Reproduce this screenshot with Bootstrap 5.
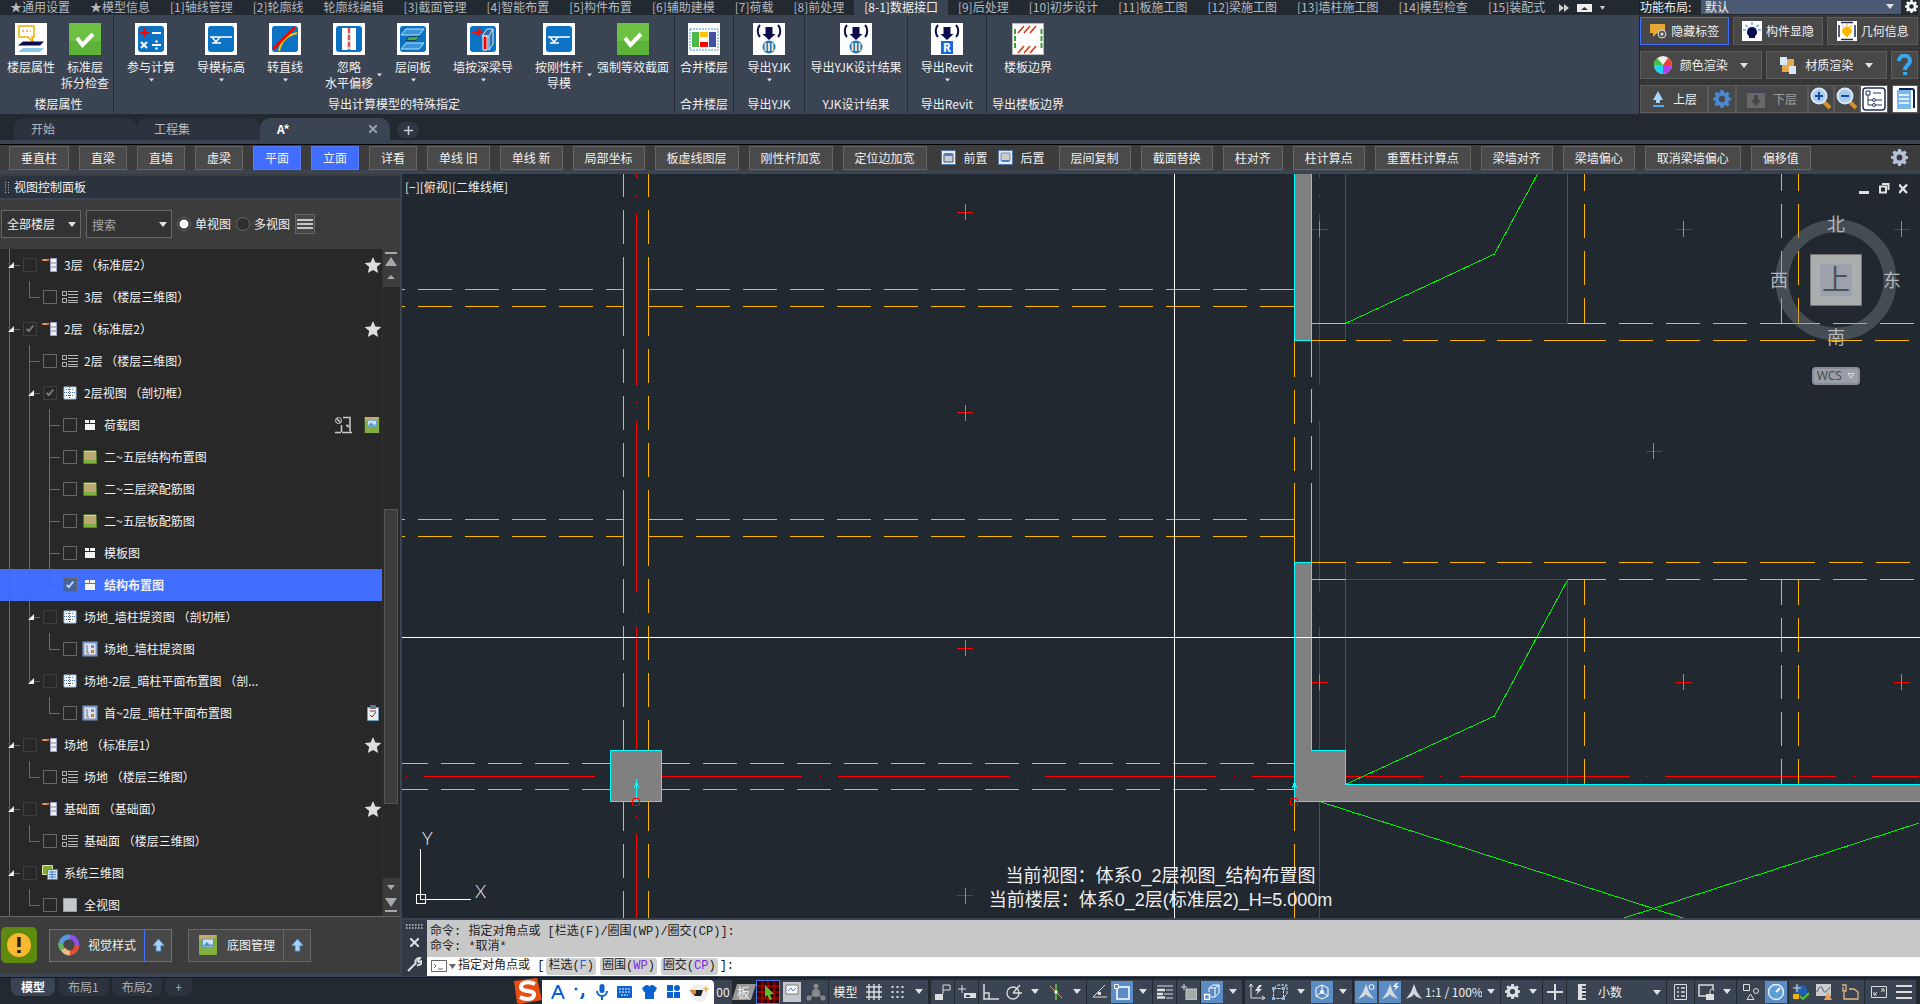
<!DOCTYPE html>
<html lang="zh-CN">
<head>
<meta charset="utf-8">
<meta name="viewport" content="width=device-width, initial-scale=1">
<title>A* - 结构布置图</title>
<link href="https://cdn.jsdelivr.net/npm/bootstrap@5.3.0/dist/css/bootstrap.min.css" rel="stylesheet">
<script src="https://cdn.jsdelivr.net/npm/bootstrap@5.3.0/dist/js/bootstrap.bundle.min.js"></script>
<style>
:root{--slate:#3b4453;--night:#222931;--coal:#3c3c3c;--edge:#666;--blue:#426eff;--ink:#f0f0f0}
body{font:12px/16px "Noto Sans CJK SC","Noto Sans",sans-serif;color:var(--ink);background:var(--night);height:100vh;overflow:hidden}
button,input,select{font:inherit;color:inherit}
button{background:none;border:0;padding:0}
svg{display:block;flex:none}
a{color:inherit;text-decoration:none}
/* ribbon */
.menu-tabs{height:15px;white-space:nowrap}
.menu-tabs a{line-height:13px;height:15px;padding:0 10px;color:#b4b9c0}
.menu-tabs a.on{background:var(--slate);color:var(--ink)}
.ribbon{background:var(--slate);height:99px}
.rgroup{border-right:1px solid #252b35;margin:1px 0}
.rgroup.first{width:114px;padding-left:4px}
.rgroup.padded{padding:0 2px}
.rgroup.last{border:0}
.rgroup .cap{line-height:16px;text-align:center;height:17px}
.rbtn{position:relative;padding-top:7px;display:flex;flex-direction:column;align-items:center;white-space:nowrap;line-height:16px}
.rbtn svg.ic{margin-bottom:4px}
.rbtn .dn{margin-top:3px}
.rbtn .side{position:absolute;right:2px;top:57px}
.c54{width:54px}.c58{width:58px}.c70{width:70px}.c78{width:78px}.c82{width:82px}.c102{width:102px}
/* display tools */
.tools{width:281px;background:#363636;border-left:1px solid #222;padding-right:2px}
.tools .rowx{height:28px;margin-bottom:6px}
.tools .rowx:last-child{margin-bottom:0}
.tbtn{border:1px solid #5c5c5c;background:#484848;display:flex;align-items:center;justify-content:center;gap:4px;height:28px}
.tbtn.sel{border-color:var(--blue)}
.tools .head{height:15px;background:var(--night);margin-bottom:2px}
.tools .head label{line-height:13px}
.tools select{appearance:none;background:#4b5a72;border:0;width:200px;height:14px;line-height:14px;padding:0 4px}
.over{position:absolute;pointer-events:none}
.a-layout{right:24px;top:4px}.a-field{right:5px;top:12px}.a-unit{right:5px;top:10px}
/* document tabs */
.doctabs{height:26px;padding:4px 0 0 14px}
.doctab{width:123px;height:22px;background:#2c333f;border-radius:10px 10px 0 0;padding-left:17px;color:#b4b9c0}
.doctab.on{background:var(--slate);color:#fff;font-weight:700;width:130px;padding-right:13px}
.plus-tab{width:22px;height:16px;background:#2f3744;border-radius:8px;margin-left:7px;color:#c8ccd2}
/* quick toolbar */
.quick{background:var(--coal);border-top:1px solid #000;height:26px;gap:10px;padding:1px 8px 0 9px;white-space:nowrap}
.qbtn{height:24px;border:1px solid var(--edge);background:#4a4a4a;padding:0 11px;line-height:22px}
.qbtn.on{background:var(--blue);border-color:#5a7cf0}
.strip{height:4px;background:var(--slate)}
/* side panel */
.side-panel{width:400px;background:var(--coal)}
.ptitle{height:22px;margin-top:2px;background:#2b333f;border-radius:4px 4px 0 0;padding-left:5px;gap:5px}
.filter{padding:0 1px;border-top:2px solid var(--slate);height:51px;gap:5px}
.fa{width:80px}.fb{width:86px}
.filter .duo{gap:4px}
.menub{border:1px solid var(--edge);padding:4px 1px;background:#484848}
.field{height:28px;background:#333;border:1px solid var(--edge);border-radius:0;appearance:none;padding:0 5px;width:100%;outline:0}
.field::placeholder{color:#a8a8a8;opacity:1}
.radio{appearance:none;width:14px;height:14px;border:1px solid #686868;border-radius:50%;background:#2e2e2e;margin:0}
.radio:checked{background:radial-gradient(#fff 0 4px,#2e2e2e 5px)}
.tree{background:#282828;overflow:hidden}
.node{height:32px;gap:0}
.node.sel{background:var(--blue);font-weight:700}
.gd{width:20px;height:32px;position:relative;flex:none}
.gd::before{content:"";position:absolute;left:9px;top:0;bottom:0;border-left:1px solid #6a6a6a}
.gd.e::before{bottom:15px}.gd.b::before{display:none}
.gd.t::after,.gd.e::after{content:"";position:absolute;left:9px;width:11px;top:16px;border-top:1px solid #6a6a6a}
.gd i{position:absolute;left:8px;top:13px;border-left:6px solid transparent;border-bottom:6px solid #eee;z-index:1}
.chk{appearance:none;width:14px;height:14px;border:1px solid #686868;background:transparent;margin:0 5px 0 3px;flex:none;position:relative}
.chk.dim{border-color:#3e3e3e}
.chk:checked::before{content:"";position:absolute;left:4px;top:1px;width:4px;height:8px;border:solid #777;border-width:0 2px 2px 0;transform:rotate(40deg)}
.sel .chk{background:#44629c}.sel .chk:checked::before{border-color:#bcd6f2}
.node label{margin-left:6px;white-space:nowrap}
.tail{margin-right:2px}
.scroller{width:18px;background:#282828;border-left:1px solid #303030}
.scroller div.pad{background:#3c3c3c;height:38px}
.thumb{background:#3d3d3d;border:1px solid #555;height:295px;width:14px;margin:222px 0 74px 1px}
.pfoot{height:57px;border-top:1px solid #6b6262;padding-left:1px}
.warn{width:36px;height:36px;background:#5f8a10;border-radius:5px;margin-right:12px}
.splitb{height:33px;border:1px solid var(--edge);background:#484848}
.splitb.sel,.splitb.sel button+button{border-color:var(--blue)}
.splitb button+button{width:27px;border-left:1px solid var(--edge)}
.gutter{width:2px;background:var(--slate)}
/* drawing */
.canvas{background:#212830;overflow:hidden}
.viewlabel{left:3px;top:5px}
.winctl{right:12px;top:8px;gap:9px}
.note{left:586px;bottom:6px;width:345px;font:18px/24px "Liberation Sans","Noto Sans CJK SC",sans-serif;text-align:center;white-space:nowrap;color:#eee}
.wcs{left:1410px;top:193px;width:48px;height:18px;border:2px solid #8d8c9b;border-radius:4px;background:#9a9ea6;color:#4a4f58;font:12px/14px "Noto Sans",sans-serif}
.l{fill:none;stroke-width:1;shape-rendering:crispEdges}
.or{stroke:#ffb400}.rd{stroke:#f00}.gr{stroke:#00f000}.pu{stroke:#a800f0}.bl{stroke:#3f489c}.cy{stroke:#0ff}.wh{stroke:#fff}
.da{stroke-dasharray:34 13}
/* command line */
.cmd{height:59px;border-top:2px solid var(--slate);border-bottom:1px solid var(--slate);background:#222831}
.cmdside{width:25px;background:#333a46}
.history{background:#c8c8c8;color:#222;height:37px;padding:5px 3px 0;font:12px/15px "Liberation Mono","Noto Sans CJK SC",monospace}
.prompt{background:#fff;color:#222;height:19px;padding-left:4px;gap:2px;font:12px/16px "Liberation Mono","Noto Sans CJK SC",monospace}
.prompt button{background:#cfcfcf;border-radius:3px;margin-right:2px;padding:0 2px;color:#222;height:17px}
.prompt b{font-weight:400;color:#2864e0}
.prompt b.v{color:#7a28e8}
/* status bar */
.status{height:27px;border-top:1px solid #14181f}
.ltabs{padding-left:11px}
.ltab{height:18px;background:#2c333f;border-radius:0 0 8px 8px;padding:0 10px;color:#a8adb5;margin-right:3px;line-height:18px}
.ltab.on{background:var(--slate);color:#fff;font-weight:700}
.ime{width:202px;height:26px}
.imebar{background:#fff;border-radius:0 4px 0 0;width:172px;height:24px}
.cell{width:24px;height:24px;display:flex;align-items:center;justify-content:center;background:var(--slate);flex:none;white-space:nowrap}
.cell.cr{width:18px}.cell.hl{background:#5b8cc4;border:1px solid var(--slate)}
.sp{border-left:1px solid var(--night)!important}
.gap2{margin-left:2px}
.cell.tx{width:34px}.cell.scale{width:56px}.cell.wide{width:28px}
.units{background:var(--slate);height:24px;width:100px;padding-left:2px}
.units select{appearance:none;border:0;background:none;width:72px;height:24px;padding:0 4px}
</style>
</head>
<body class="d-flex flex-column">
<svg width="0" height="0" class="position-absolute" aria-hidden="true">
<defs>
<symbol id="dn" viewBox="0 0 10 6"><path d="M0 0h10L5 6z" fill="#dfe2e6"/></symbol>
<symbol id="gear" viewBox="0 0 16 16"><path fill="currentColor" fill-rule="evenodd" d="M6.7 0h2.6l.4 2.1 1.4.6L12.900 1.500l1.800 1.800-1.200 1.800.6 1.400 2.100.4v2.300l-2.100.4-.6 1.400 1.200 1.800-1.800 1.800-1.800-1.200-1.400.6L9.300 16H6.700l-.4-2.100-1.400-.6-1.800 1.200-1.800-1.800 1.200-1.800-.6-1.400L0 9.200V6.900l2-.4.600-1.400L1.300 3.300 3.100 1.500l1.800 1.200 1.400-.6zM8 5.200A2.800 2.800 0 1 0 8 10.800 2.800 2.800 0 1 0 8 5.200z"/></symbol>
<symbol id="star" viewBox="0 0 18 18"><path d="M9 1l2.400 5.600 6 .5-4.600 4 1.400 6L9 13.900l-5.200 3.200 1.400-6-4.600-4 6-.5z" fill="#dcdfe0"/></symbol>
<symbol id="floor" viewBox="0 0 16 16"><path d="M0 3h7" stroke="#d07040" stroke-width="2"/><path d="M1 3h4" stroke="#eab080"/><path d="M8.500 1.500h6v13h-6z" fill="#eef0f6" stroke="#a0a6c8"/><path d="M9 6h5M9 10h5" stroke="#888"/></symbol>
<symbol id="lst" viewBox="0 0 16 16"><path d="M.5 2.500h4v4h-4zM.5 9.500h4v4h-4zM6 2.500h10M6 5.500h10M6 8.500h10M6 11.500h10M6 13.500h10" fill="none" stroke="#b8b8b8"/></symbol>
<symbol id="gridv" viewBox="0 0 16 16"><path d="M2 2h12v12H2z" fill="#fff" stroke="#9fc0e8"/><path d="M7.500 2v12M2 7.500h12M4 4.500h8M4 10.500h8" stroke="#3f68a8" stroke-dasharray="1 1"/></symbol>
<symbol id="tbl" viewBox="0 0 16 16"><path d="M3 3h4v3H3zM8 3h5v3H8zM3 7h10v6H3z" fill="#f4f4f4"/></symbol>
<symbol id="plan" viewBox="0 0 16 16"><path d="M2 2h12v12H2z" fill="#c0a878" stroke="#7fb83a"/><path d="M2 11h12v3H2z" fill="#7fb040"/><path d="M1.500 14.500h13v-4" fill="none" stroke="#589020"/><path d="M2 2.500h12" stroke="#d8dcae"/></symbol>
<symbol id="sheet" viewBox="0 0 16 16"><path d="M1.500 1.500h13v13h-13z" fill="#dfe5ee" stroke="#7b9cc8" stroke-width="2"/><path d="M5 4v8M5 12h2" stroke="#667"/><path d="M9 4h3v3H9z" fill="#5a9ae0"/><path d="M9 9h3v3H9z" fill="#c87a30"/></symbol>
<symbol id="sys3" viewBox="0 0 16 16"><path d="M.5.5h10v9H.5z" fill="#86a834" stroke="#d8e8a0"/><path d="M5.500 4.500h10v10h-10z" fill="#cfe4f8" stroke="#4a80c0"/><path d="M7 7h7M7 9.500h7M7 12h7M10 6v8" stroke="#4a80c0"/></symbol>
<symbol id="full" viewBox="0 0 16 16"><path d="M1.500 1.500h13v13h-13z" fill="#c4c9cc" stroke="#9aa0a4"/></symbol>
<symbol id="pic" viewBox="0 0 20 20"><path d="M1 0h18v20H1z" fill="#7fb040"/><path d="M1 0h18l-3 4H1z" fill="#cda766"/><path d="M4.500 4h11v8h-11z" fill="#c8e4fa" stroke="#5a90c8"/><path d="M5 11l4-4 3 3 2-1 1 2z" fill="#4a90c0"/></symbol>
<symbol id="up" viewBox="0 0 14 16"><path d="M7 1l6 7h-3.500v6h-5V8H1z" fill="#a8d0f4" stroke="#5a98dc"/></symbol>
<symbol id="okbox" viewBox="0 0 32 32"><path d="M0 0h32v32H0z" fill="#5cb338"/><path d="M0 0h32v18H0z" fill="#6cc044"/><path d="M8 15l5.500 7L24 11" fill="none" stroke="#fff" stroke-width="4"/></symbol>
<symbol id="frame" viewBox="0 0 32 32"><path d="M0 0h32v32H0z" fill="#fff"/><rect x="3" y="3" width="26" height="26" rx="3" fill="#0b72c4"/></symbol>
<symbol id="level" viewBox="0 0 32 32"><use href="#frame"/><path d="M5 14h22M7 14l4 5 4-5M7 20h9" fill="none" stroke="#fff" stroke-width="1.500"/></symbol>
<symbol id="exp" viewBox="0 0 32 32"><path d="M0 0h32v32H0z" fill="#fff"/><path d="M7 2c-3 3-3 9 0 12M25 2c3 3 3 9 0 12" fill="none" stroke="#0a0a4c" stroke-width="2"/><path d="M12.500 4h7v7h3L16 17l-6.500-6h3z" fill="#0a0a4c"/></symbol>
<symbol id="yjk" viewBox="0 0 32 32"><use href="#exp"/><circle cx="16" cy="24" r="6.500" fill="#2a78b8"/><path d="M12.500 20v8M16 20v8M19.500 20v8" stroke="#e8e0c0" stroke-width="2"/></symbol>
<symbol id="mag" viewBox="0 0 24 24"><path d="M14 14l7 7" stroke="#d09030" stroke-width="4"/><circle cx="10" cy="9" r="7.500" fill="#a8ccf0" stroke="#d8e6f4" stroke-width="2"/><path d="M6 9h8" stroke="#1848a0" stroke-width="2"/></symbol>
<symbol id="comp" viewBox="0 0 18 18"><path d="M9 1l3 8 5 7-6-2.500L9 11l-2 2.500L1 16l5-7z" fill="#d4d8dc"/></symbol>
</defs>
</svg>

<header class="d-flex flex-none">
 <div class="flex-grow-1 overflow-hidden">
  <nav class="menu-tabs d-flex"><a href="#">★通用设置</a><a href="#">★模型信息</a><a href="#">[1]轴线管理</a><a href="#">[2]轮廓线</a><a href="#">轮廓线编辑</a><a href="#">[3]截面管理</a><a href="#">[4]智能布置</a><a href="#">[5]构件布置</a><a href="#">[6]辅助建模</a><a href="#">[7]荷载</a><a href="#">[8]前处理</a><a href="#" class="on">[8-1]数据接口</a><a href="#">[9]后处理</a><a href="#">[10]初步设计</a><a href="#">[11]板施工图</a><a href="#">[12]梁施工图</a><a href="#">[13]墙柱施工图</a><a href="#">[14]模型检查</a><a href="#">[15]装配式</a>
   <button class="d-flex align-items-start pt-1 gap-2 ms-1" aria-label="更多"><svg width="10" height="8"><path d="M0 0l5 4-5 4zM5 0l5 4-5 4z" fill="#ccc"/></svg><svg width="15" height="8"><path d="M0 0h15v8H0z" fill="#eee"/><path d="M4 6h7L7.500 3z" fill="#333"/></svg><svg width="5" height="8"><path d="M0 2h5L2.500 6z" fill="#ccc"/></svg></button>
  </nav>
  <div class="ribbon d-flex">
   <section class="rgroup first d-flex flex-column justify-content-between">
    <div class="d-flex">
     <button class="rbtn c54"><svg class="ic" width="32" height="32"><path d="M0 0h32v32H0z" fill="#fff"/><path d="M4 3h15v11h-2l1 5-5-5H4z" fill="none" stroke="#f0b000" stroke-width="1.500"/><path d="M7 8h2M11 8h2M15 8h1" stroke="#e08000"/><path d="M8 18.500h21l-4 4H3z" fill="#0a0a50"/><path d="M8 25h21l-4 4H3z" fill="#8cc8e8"/></svg><span>楼层属性</span></button>
     <button class="rbtn c54"><svg class="ic" width="32" height="32"><use href="#okbox"/></svg><span>标准层<br>拆分检查</span></button>
    </div><div class="cap">楼层属性</div>
   </section>
   <section class="rgroup padded d-flex flex-column justify-content-between">
    <div class="d-flex">
     <button class="rbtn c70"><svg class="ic" width="32" height="32"><use href="#frame"/><path d="M5 10h9M9.500 5v9" stroke="#f00" stroke-width="2"/><path d="M17 10h9M17 22h9M6 19l6 6M12 19l-6 6" stroke="#fff" stroke-width="2"/><circle cx="21.500" cy="18.500" r="1.200" fill="#fff"/><circle cx="21.500" cy="25.500" r="1.200" fill="#fff"/></svg><span>参与计算</span><svg class="dn" width="5" height="4"><use href="#dn"/></svg></button>
     <button class="rbtn c70"><svg class="ic" width="32" height="32"><use href="#level"/></svg><span>导模标高</span><svg class="dn" width="5" height="4"><use href="#dn"/></svg></button>
     <button class="rbtn c58"><svg class="ic" width="32" height="32"><use href="#frame"/><path d="M10 28c2-9 8-16 18-18" fill="none" stroke="#ffc000" stroke-width="2"/><path d="M4 26L26 4" stroke="#f00" stroke-width="2.500"/></svg><span>转直线</span><svg class="dn" width="5" height="4"><use href="#dn"/></svg></button>
     <button class="rbtn c70"><svg class="ic" width="32" height="32"><use href="#frame"/><path d="M9 5h5v22H9zM18 5h5v22h-5z" fill="#fff"/><path d="M14 5h4v22h-4z" fill="#ddd"/><path d="M16 5v22" stroke="#e02010" stroke-width="1.500" stroke-dasharray="5 2"/></svg><span>忽略<br>水平偏移</span><svg class="side" width="5" height="4"><use href="#dn"/></svg></button>
     <button class="rbtn c58"><svg class="ic" width="32" height="32"><use href="#frame"/><path d="M9 6h18l-5 6H4zM9 20h18l-5 6H4z" fill="#3a94d8" stroke="#b8e0f8"/><path d="M12 13.500h11l-4 4H9z" fill="#40b040" stroke="#104070"/></svg><span>层间板</span><svg class="dn" width="5" height="4"><use href="#dn"/></svg></button>
     <button class="rbtn c82"><svg class="ic" width="32" height="32"><use href="#frame"/><path d="M5 9h9M10 5.500l4.500 3.500-4.500 3.500" fill="none" stroke="#f01010" stroke-width="2"/><path d="M15 13l5-7h6l-4 7zM22 13v14l4-6V6" fill="#2d6fa8" stroke="#d8eaf6"/><path d="M16 13h4v14h-4z" fill="#f00" stroke="#fff"/></svg><span>墙按深梁导</span><svg class="dn" width="5" height="4"><use href="#dn"/></svg></button>
     <button class="rbtn c70"><svg class="ic" width="32" height="32"><use href="#level"/></svg><span>按刚性杆<br>导模</span><svg class="side" width="5" height="4"><use href="#dn"/></svg></button>
     <button class="rbtn c78"><svg class="ic" width="32" height="32"><use href="#okbox"/></svg><span>强制等效截面</span></button>
    </div><div class="cap">导出计算模型的特殊指定</div>
   </section>
   <section class="rgroup d-flex flex-column justify-content-between">
    <button class="rbtn c58"><svg class="ic" width="32" height="32"><path d="M0 0h32v32H0z" fill="#fff"/><path d="M2 6h28v21H2z" fill="none" stroke="#3a90e0" stroke-dasharray="2 1"/><path d="M4 9h7v15H4z" fill="#4cb848"/><path d="M12 9h8v5h-8z" fill="#ffc000"/><path d="M12 19h8v5h-8z" fill="#f00"/><path d="M21 9h7v15h-7z" fill="#4450a0"/></svg><span>合并楼层</span></button><div class="cap">合并楼层</div>
   </section>
   <section class="rgroup d-flex flex-column justify-content-between">
    <button class="rbtn c70"><svg class="ic" width="32" height="32"><use href="#yjk"/></svg><span>导出YJK</span><svg class="dn" width="5" height="4"><use href="#dn"/></svg></button><div class="cap">导出YJK</div>
   </section>
   <section class="rgroup d-flex flex-column justify-content-between">
    <button class="rbtn c102"><svg class="ic" width="32" height="32"><use href="#yjk"/></svg><span>导出YJK设计结果</span></button><div class="cap">YJK设计结果</div>
   </section>
   <section class="rgroup d-flex flex-column justify-content-between">
    <button class="rbtn c78"><svg class="ic" width="32" height="32"><use href="#exp"/><path d="M10 18h12v13H10z" fill="#1868e0"/><text x="12" y="29" font-size="12" font-weight="700" fill="#fff" font-family="Noto Sans">R</text></svg><span>导出Revit</span><svg class="dn" width="5" height="4"><use href="#dn"/></svg></button><div class="cap">导出Revit</div>
   </section>
   <section class="rgroup last d-flex flex-column justify-content-between">
    <button class="rbtn c82"><svg class="ic" width="32" height="32"><path d="M.5.5h31v31H.5z" fill="#fff" stroke="#bbb"/><path d="M3 6v21M29.500 6v21" stroke="#3aa030" stroke-width="2" stroke-dasharray="5 2"/><path d="M6 10l6-7M12 10l6-7M18 10l6-7M6 30l6-7M12 30l6-7M18 30l6-7" stroke="#e03010" stroke-width="1.500"/></svg><span>楼板边界</span></button><div class="cap">导出楼板边界</div>
   </section>
  </div>
 </div>
 <aside class="tools flex-shrink-0">
  <div class="head d-flex justify-content-between align-items-start position-relative">
   <label for="layoutSel">功能布局:</label>
   <div class="d-flex"><select id="layoutSel"><option>默认</option></select><svg class="over a-layout" width="8" height="5"><use href="#dn"/></svg><svg class="ms-1 text-light" width="13" height="13"><use href="#gear"/></svg></div>
  </div>
  <div class="d-flex rowx gap-1"><button class="tbtn sel flex-fill"><svg width="18" height="16"><path d="M1 1h15v9H8l-4 4v-4H1z" fill="#e8a838"/><circle cx="13" cy="11" r="4" fill="#555" stroke="#ddd"/><circle cx="13" cy="11" r="1.500" fill="#ddd"/></svg>隐藏标签</button><button class="tbtn flex-fill"><svg width="20" height="20"><path d="M0 0h20v20H0z" fill="#fff"/><path d="M10 6a5 5 0 0 1 3 9v2H7v-2a5 5 0 0 1 3-9" fill="#0a0a50"/><path d="M3 4l3 2M10 1v3M17 4l-3 2M1 9h3M19 9h-3" stroke="#70a8e0" stroke-width="1.500"/></svg>构件显隐</button><button class="tbtn flex-fill"><svg width="20" height="20"><path d="M0 0h20v20H0z" fill="#fff"/><path d="M4 1.500h12M2 4v12M18 4v12M4 18.500h12" stroke="#222850" stroke-width="1.500"/><path d="M10 6a4 4 0 0 1 3 7l-3 3-3-3a4 4 0 0 1 3-7M5 4l2 2M10 2v3M15 4l-2 2" fill="#ffb800" stroke="#ffb800"/></svg>几何信息</button></div>
  <div class="d-flex rowx gap-1"><button class="tbtn flex-fill gap-2"><svg width="18" height="20" viewBox="0 0 18 18"><circle cx="9" cy="9" r="9" fill="#eee"/><path d="M9 9L3 2A9 9 0 0 0 0 9z" fill="#40c040"/><path d="M9 9H0a9 9 0 0 0 9 9z" fill="#20d0f0"/><path d="M9 9v9a9 9 0 0 0 9-9z" fill="#b040f0"/><path d="M9 9h9a9 9 0 0 0-4-7z" fill="#f04030"/></svg>颜色渲染<svg class="ms-1" width="8" height="5"><use href="#dn"/></svg></button><button class="tbtn flex-fill gap-2"><svg width="18" height="18"><path d="M1 1h7v8H1zM10 10h7v8h-7z" fill="#d8e8f8"/><path d="M8 3h7v7H8zM3 9h7v7H3z" fill="#e8a850"/></svg>材质渲染<svg class="ms-1" width="8" height="5"><use href="#dn"/></svg></button><button class="tbtn px-1" aria-label="帮助"><svg width="17" height="22"><path d="M3 7c0-7 11-7 11 0 0 4-5 4-5 9M9 18v3" fill="none" stroke="#38a8f0" stroke-width="4"/></svg></button></div>
  <div class="d-flex rowx"><button class="tbtn flex-fill gap-2"><svg width="14" height="17"><path d="M7 0l5 9H9v3H5V9H2z" fill="#a8d4f8"/><path d="M2 15h11" stroke="#58a8e8" stroke-width="2"/></svg>上层</button><button class="tbtn px-1" aria-label="设置"><svg width="18" height="18" color="#4a88d0"><use href="#gear"/></svg></button><button class="tbtn flex-fill gap-2" disabled><svg width="18" height="18" opacity=".5"><path d="M0 0h18v18H0z" fill="#888"/><path d="M0 0h18v3H0z" fill="#446"/><path d="M7 5h4v5h3l-5 6-5-6h3z" fill="#444"/></svg><span class="opacity-50">下层</span></button><button class="tbtn" aria-label="放大"><svg width="24" height="24"><use href="#mag"/><path d="M10 5v8" stroke="#1848a0" stroke-width="2"/></svg></button><button class="tbtn" aria-label="缩小"><svg width="24" height="24"><use href="#mag"/></svg></button><button class="tbtn" aria-label="图层"><svg width="26" height="26"><path d="M0 0h26v26H0z" fill="#fff"/><rect x="2" y="2" width="22" height="22" rx="3" fill="none" stroke="#223058" stroke-width="1.500"/><path d="M5 5h4v4H5zM12 7h8M7 9v10h4M7 14h4M15 14h6M15 19h6" fill="none" stroke="#223058"/><circle cx="13" cy="14" r="1.500" fill="none" stroke="#223058"/><circle cx="13" cy="19" r="1.500" fill="none" stroke="#223058"/></svg></button><button class="tbtn ms-1" aria-label="清单"><svg width="24" height="26"><path d="M0 0h24v26H0z" fill="#fff"/><path d="M6 3h13a2 2 0 0 1 2 2v17" fill="none" stroke="#10205c" stroke-width="2"/><path d="M4 4h14v19H4z" fill="#7ab8ec"/><path d="M6 9h10M6 13h10M6 17h10" stroke="#fff" stroke-width="1.500"/></svg></button></div>
 </aside>
</header>

<nav class="doctabs d-flex">
 <a href="#" class="doctab d-flex align-items-center">开始</a><a href="#" class="doctab d-flex align-items-center">工程集</a><a href="#" class="doctab on d-flex align-items-center justify-content-between">A*<svg width="8" height="8"><path d="M0 0l8 8M8 0L0 8" stroke="#9aa0a8" stroke-width="2"/></svg></a><button class="plus-tab d-flex align-items-center justify-content-center mt-1" aria-label="新建"><svg width="9" height="9"><path d="M0 4.500h9M4.500 0v9" stroke="#c8ccd2" stroke-width="1.500"/></svg></button>
</nav>
<div class="strip"></div>
<div class="quick d-flex">
 <button class="qbtn">垂直柱</button><button class="qbtn">直梁</button><button class="qbtn">直墙</button><button class="qbtn">虚梁</button><button class="qbtn on">平面</button><button class="qbtn on">立面</button><button class="qbtn">详看</button><button class="qbtn">单线 旧</button><button class="qbtn">单线 新</button><button class="qbtn">局部坐标</button><button class="qbtn">板虚线图层</button><button class="qbtn">刚性杆加宽</button><button class="qbtn">定位边加宽</button>
 <button class="d-flex align-items-center gap-2 ms-1"><svg width="15" height="15"><path d="M.5.5h14v14H.5z" fill="#e8eef6" stroke="#5078b0"/><path d="M3 4h9v8H3z" fill="#ccd" stroke="#456"/><path d="M4 3h7v3H4z" fill="#4a80c8"/></svg>前置</button><button class="d-flex align-items-center gap-2"><svg width="15" height="15"><path d="M.5.5h14v14H.5z" fill="#e8eef6" stroke="#5078b0"/><path d="M3 3h9v8H3z" fill="#ccc" stroke="#888"/><path d="M4 10h7v2H4z" fill="#4a80c8"/></svg>后置</button>
 <button class="qbtn ms-1">层间复制</button><button class="qbtn">截面替换</button><button class="qbtn">柱对齐</button><button class="qbtn">柱计算点</button><button class="qbtn">重置柱计算点</button><button class="qbtn">梁墙对齐</button><button class="qbtn">梁墙偏心</button><button class="qbtn">取消梁墙偏心</button><button class="qbtn">偏移值</button>
 <button class="ms-auto me-1 align-self-center" aria-label="选项"><svg width="17" height="17" color="#b4c4d8"><use href="#gear"/></svg></button>
</div>
<div class="strip"></div>

<main class="d-flex flex-grow-1 overflow-hidden">
 <aside class="side-panel d-flex flex-column flex-shrink-0">
  <div><div class="ptitle d-flex align-items-center"><svg width="4" height="12"><path d="M.5 1v11M3.500 1v11" stroke="#bbb" stroke-dasharray="1 1.500"/></svg>视图控制面板</div></div>
  <div class="filter d-flex align-items-center">
   <div class="position-relative fa"><select class="field" aria-label="楼层"><option>全部楼层</option></select><svg class="over a-field" width="8" height="5"><use href="#dn"/></svg></div>
   <div class="position-relative fb"><input class="field" placeholder="搜索" aria-label="搜索"><svg class="over a-field" width="8" height="5"><use href="#dn"/></svg></div>
   <div class="duo d-flex align-items-center"><input class="radio" type="radio" name="v" id="v1" checked><label for="v1">单视图</label></div>
   <div class="duo d-flex align-items-center"><input class="radio" type="radio" name="v" id="v2"><label for="v2">多视图</label></div>
   <button class="menub" aria-label="菜单"><svg width="16" height="10"><path d="M0 1h16M0 5h16M0 9h16" stroke="#eee" stroke-width="1.500"/></svg></button>
  </div>
  <div class="tree d-flex flex-grow-1">
   <div class="flex-grow-1">
    <div class="node d-flex align-items-center"><span class="gd t"><i></i></span><input class="chk dim" type="checkbox" id="n1"><svg width="16" height="16"><use href="#floor"/></svg><label for="n1">3层 （标准层2）</label><svg class="ms-auto" width="18" height="18"><use href="#star"/></svg></div>
    <div class="node d-flex align-items-center"><span class="gd"></span><span class="gd e"></span><input class="chk" type="checkbox" id="n2"><svg width="16" height="16"><use href="#lst"/></svg><label for="n2">3层 （楼层三维图）</label></div>
    <div class="node d-flex align-items-center"><span class="gd t"><i></i></span><input class="chk dim" type="checkbox" id="n3" checked><svg width="16" height="16"><use href="#floor"/></svg><label for="n3">2层 （标准层2）</label><svg class="ms-auto" width="18" height="18"><use href="#star"/></svg></div>
    <div class="node d-flex align-items-center"><span class="gd"></span><span class="gd t"></span><input class="chk" type="checkbox" id="n4"><svg width="16" height="16"><use href="#lst"/></svg><label for="n4">2层 （楼层三维图）</label></div>
    <div class="node d-flex align-items-center"><span class="gd"></span><span class="gd t"><i></i></span><input class="chk dim" type="checkbox" id="n5" checked><svg width="16" height="16"><use href="#gridv"/></svg><label for="n5">2层视图 （剖切框）</label></div>
    <div class="node d-flex align-items-center"><span class="gd"></span><span class="gd"></span><span class="gd t"></span><input class="chk" type="checkbox" id="n6"><svg width="16" height="16"><use href="#tbl"/></svg><label for="n6">荷载图</label><svg class="ms-auto me-2" width="18" height="18"><circle cx="4.500" cy="4.500" r="3" fill="none" stroke="#ccc"/><path d="M2.500 2.500l4 4M9 1.500h7v14M8 16.500h10M1 16.500h6M7.500 9v7M12 9.500h2v2" fill="none" stroke="#ccc" stroke-width="1.500"/></svg><svg class="ms-1 tail" width="16" height="16"><use href="#pic"/></svg></div>
    <div class="node d-flex align-items-center"><span class="gd"></span><span class="gd"></span><span class="gd t"></span><input class="chk" type="checkbox" id="n7"><svg width="16" height="16"><use href="#plan"/></svg><label for="n7">二~五层结构布置图</label></div>
    <div class="node d-flex align-items-center"><span class="gd"></span><span class="gd"></span><span class="gd t"></span><input class="chk" type="checkbox" id="n8"><svg width="16" height="16"><use href="#plan"/></svg><label for="n8">二~三层梁配筋图</label></div>
    <div class="node d-flex align-items-center"><span class="gd"></span><span class="gd"></span><span class="gd t"></span><input class="chk" type="checkbox" id="n9"><svg width="16" height="16"><use href="#plan"/></svg><label for="n9">二~五层板配筋图</label></div>
    <div class="node d-flex align-items-center"><span class="gd"></span><span class="gd"></span><span class="gd t"></span><input class="chk" type="checkbox" id="n10"><svg width="16" height="16"><use href="#tbl"/></svg><label for="n10">模板图</label></div>
    <div class="node sel d-flex align-items-center"><span class="gd"></span><span class="gd"></span><span class="gd e"></span><input class="chk" type="checkbox" id="n11" checked><svg width="16" height="16"><use href="#tbl"/></svg><label for="n11">结构布置图</label></div>
    <div class="node d-flex align-items-center"><span class="gd"></span><span class="gd t"><i></i></span><input class="chk dim" type="checkbox" id="n12"><svg width="16" height="16"><use href="#gridv"/></svg><label for="n12">场地_墙柱提资图 （剖切框）</label></div>
    <div class="node d-flex align-items-center"><span class="gd"></span><span class="gd"></span><span class="gd e"></span><input class="chk" type="checkbox" id="n13"><svg width="16" height="16"><use href="#sheet"/></svg><label for="n13">场地_墙柱提资图</label></div>
    <div class="node d-flex align-items-center"><span class="gd"></span><span class="gd e"><i></i></span><input class="chk dim" type="checkbox" id="n14"><svg width="16" height="16"><use href="#gridv"/></svg><label for="n14">场地-2层_暗柱平面布置图 （剖...</label></div>
    <div class="node d-flex align-items-center"><span class="gd"></span><span class="gd b"></span><span class="gd e"></span><input class="chk" type="checkbox" id="n15"><svg width="16" height="16"><use href="#sheet"/></svg><label for="n15">首~2层_暗柱平面布置图</label><svg class="ms-auto tail" width="14" height="16"><path d="M1.500 2.500h11v13h-11z" fill="#e8eef4" stroke="#6f9cc0"/><path d="M4 0h6v4H4z" fill="#678"/><path d="M4 10l2 2 4-5M4 6h6" fill="none" stroke="#a03020"/></svg></div>
    <div class="node d-flex align-items-center"><span class="gd t"><i></i></span><input class="chk dim" type="checkbox" id="n16"><svg width="16" height="16"><use href="#floor"/></svg><label for="n16">场地 （标准层1）</label><svg class="ms-auto" width="18" height="18"><use href="#star"/></svg></div>
    <div class="node d-flex align-items-center"><span class="gd"></span><span class="gd e"></span><input class="chk" type="checkbox" id="n17"><svg width="16" height="16"><use href="#lst"/></svg><label for="n17">场地 （楼层三维图）</label></div>
    <div class="node d-flex align-items-center"><span class="gd t"><i></i></span><input class="chk dim" type="checkbox" id="n18"><svg width="16" height="16"><use href="#floor"/></svg><label for="n18">基础面 （基础面）</label><svg class="ms-auto" width="18" height="18"><use href="#star"/></svg></div>
    <div class="node d-flex align-items-center"><span class="gd"></span><span class="gd e"></span><input class="chk" type="checkbox" id="n19"><svg width="16" height="16"><use href="#lst"/></svg><label for="n19">基础面 （楼层三维图）</label></div>
    <div class="node d-flex align-items-center"><span class="gd t"><i></i></span><input class="chk dim" type="checkbox" id="n20"><svg width="16" height="16"><use href="#sys3"/></svg><label for="n20">系统三维图</label></div>
    <div class="node d-flex align-items-center"><span class="gd"></span><span class="gd e"></span><input class="chk" type="checkbox" id="n21"><svg width="16" height="16"><use href="#full"/></svg><label for="n21">全视图</label></div>
   </div>
   <div class="scroller d-flex flex-column flex-shrink-0">
    <div class="pad"><svg width="16" height="38"><path d="M2 3h12v2H2zM8 8l6 9H2zM8 26l4 4H4z" fill="#a4a8ae"/></svg></div>
    <div class="thumb"></div>
    <div class="pad"><svg width="16" height="38"><path d="M4 7h8l-4 5zM2 20h12l-6 9zM2 32h12v2H2z" fill="#a4a8ae"/></svg></div>
   </div>
  </div>
  <div class="pfoot d-flex align-items-center">
   <button class="warn d-flex align-items-center justify-content-center" aria-label="提示"><svg width="24" height="24"><circle cx="12" cy="12" r="12" fill="#f8b830"/><path d="M12 4v10M12 17v3" stroke="#222" stroke-width="3.500"/></svg></button>
   <div class="splitb sel d-flex me-3"><button class="d-flex align-items-center gap-2 px-2"><svg width="22" height="22"><g fill="none" stroke-width="5"><path d="M3 9a8 8 0 0 1 9-6" stroke="#5898e0"/><path d="M12 3a8 8 0 0 1 7 8" stroke="#9050e8"/><path d="M19 11a8 8 0 0 1-7 8" stroke="#e05030"/><path d="M12 19a8 8 0 0 1-7-4" stroke="#f0b880"/><path d="M4.500 15.500A8 8 0 0 1 3 9" stroke="#60b860"/></g></svg>视觉样式</button><button class="d-flex align-items-center justify-content-center" aria-label="展开"><svg width="13" height="15"><use href="#up"/></svg></button></div>
   <div class="splitb d-flex"><button class="d-flex align-items-center gap-2 px-2"><svg width="22" height="20"><use href="#pic"/></svg>底图管理</button><button class="d-flex align-items-center justify-content-center" aria-label="展开"><svg width="13" height="15"><use href="#up"/></svg></button></div>
  </div>
  <div class="strip flex-shrink-0"></div>
 </aside>
 <div class="gutter flex-shrink-0"></div>
 <section class="d-flex flex-column flex-grow-1 overflow-hidden">
  <div class="canvas flex-grow-1 position-relative">
   <svg class="position-absolute top-0 start-0 w-100 h-100"><g transform="translate(-402 -174)">
    <!-- wall and column fills -->
    <path d="M1294 174h17v166h-17zM1294 562h17v188h34v34h575v17h-626zM610 750h51v51h-51z" fill="#808080"/>
    <!-- grid axes -->
    <path class="l rd" d="M636.500 174v4M636.500 195v2M636.500 214v171M636.500 402v1M636.500 421v171M636.500 609v1M636.500 627v123M636.500 816v2M636.500 834v84M1319.500 174v4M1319.500 195v2M1319.500 214v171M1319.500 402v1M1319.500 421v171M1319.500 609v1M1319.500 627v123M406 776.500h1M424 776.500h171M662 776.500h140M820 776.500h1M838 776.500h171M1027 776.500h1M1045 776.500h171M1234 776.500h1M1252 776.500h42M1346 776.500h77M1440 776.500h1M1459 776.500h171M1647 776.500h1M1665 776.500h171M1854 776.500h1M1872 776.500h47M1345.500 324v17M1345.500 562v17"/>
    <!-- beams, left bay -->
    <path class="l or da" stroke-dashoffset="31" d="M402 289.500h221M402 306.500h221M402 519.500h221M402 536.500h221"/>
    <path class="l or da" d="M649 289.500h645M649 306.500h645M649 519.500h645M649 536.500h645"/>
    <path class="l or da" stroke-dashoffset="8" d="M402 763.500h208M402 789.500h208"/>
    <path class="l or da" stroke-dashoffset="6" d="M662 763.500h632M662 789.500h632"/>
    <g class="l or"><path class="da" stroke-dashoffset="11" d="M623.500 174v132M648.500 174v132"/><path class="da" stroke-dashoffset="4" d="M623.500 306v213M648.500 306v213M623.500 536v214M648.500 536v214"/><path class="da" stroke-dashoffset="5" d="M623.500 802v116M648.500 802v116M1294.500 802v116"/><path d="M623.500 289v17M648.500 289v17M623.500 519v17M648.500 519v17"/></g>
    <!-- beams, right bays -->
    <path class="l or" d="M1294.500 340v37M1294.500 390v34M1294.500 437v34M1294.500 483v79M1311.500 340v37M1311.500 389v34M1311.500 436v34M1311.500 483v79M1311 323.500h35M1568 323.500h38M1619 323.500h34M1666 323.500h34M1713 323.500h34M1760 323.500h60M1833 323.500h34M1880 323.500h34M1311 579.500h35M1568 579.500h38M1619 579.500h34M1666 579.500h34M1713 579.500h34M1760 579.500h60M1833 579.500h34M1880 579.500h34M1311 340.500h35M1356 340.500h35M1403 340.500h35M1450 340.500h35M1497 340.500h35M1544 340.500h62M1619 340.500h34M1666 340.500h34M1713 340.500h34M1760 340.500h55M1828 340.500h34M1875 340.500h34M1311 562.500h35M1356 562.500h35M1403 562.500h35M1450 562.500h35M1497 562.500h35M1544 562.500h62M1619 562.500h34M1666 562.500h34M1713 562.500h34M1760 562.500h55M1829 562.500h34M1876 562.500h34"/>
    <path class="l or da" stroke-dashoffset="17" d="M1584.500 174v149M1781.500 174v149M1798.500 174v149"/>
    <path class="l or da" stroke-dashoffset="8" d="M1584.500 579v205M1781.500 579v205M1798.500 579v205"/>
    <path class="l pu" d="M1346 323.500h221.500V174M1346 579.500h221.500V784M1319.500 802v116"/>
    <path class="l bl" d="M1345.500 174v149M1345.500 580v170"/>
    <path class="l gr" d="M1537.500 174l-43 80-148 69M1567.500 580l-73 136-148 68M1321 802l362 116M1919 823l-295 95"/>
    <path class="l cy" d="M1294.500 174v166.500h17V174M1920 784.500h-574.500V750.500h-34V562.500h-17V801.500H1920M610.500 750.500h51v51h-51zM636.500 781v20M634.500 788l2-7 2 7M1294.500 782v10M1292.500 788l2-6 2 6"/>
    <circle class="l rd" cx="636" cy="802" r="4"/><circle class="l rd" cx="1294" cy="802" r="4"/>
    <!-- slab marks -->
    <path class="l rd" d="M957 212.500h16M957 412.500h16M957 648.500h16M957 895.500h16M1312 229.500h16M1676 229.500h16M1894 229.500h16M1646 451.500h16M1312 682.500h16M1676 682.500h16M1894 682.500h16"/>
    <path class="l gr" d="M965.500 204v16M965.500 405v16M965.500 640v16M965.500 888v16M1319.500 221v16M1683.500 221v16M1901.500 221v16M1653.500 443v16M1319.500 674v16M1683.500 674v16M1901.500 674v16"/>
    <!-- UCS -->
    <path class="l wh" d="M420.500 849v50.500H471M416.500 894.500h9v9h-9z"/>
    <g fill="#eee" font-family="Lato, sans-serif" font-weight="300" font-size="18"><text x="422" y="845">Y</text><text x="475" y="898">X</text></g>
    <!-- cursor -->
    <path class="l wh" d="M1174.500 174v744M402 637.500h1518"/>
    <!-- view cube -->
    <circle cx="1836" cy="280" r="54" fill="none" stroke="#7a828c" stroke-opacity=".4" stroke-width="13"/>
    <path d="M1810.500 254.500h51v51h-51z" fill="#aaaeae" stroke="#777"/><path d="M1820 264h32v32h-32z" fill="#9ca1ab"/>
    <g font-family="Noto Sans CJK SC" font-size="18" text-anchor="middle" fill="#b4b6ba"><text x="1836" y="231">北</text><text x="1779" y="287">西</text><text x="1892" y="287">东</text><text x="1836" y="344">南</text><text x="1836" y="290" font-size="28" fill="#4c5058">上</text></g>
   </g></svg>
   <div class="viewlabel position-absolute">[−][俯视][二维线框]</div>
   <div class="winctl position-absolute d-flex"><svg width="11" height="12"><path d="M0 9h10v3H0z" fill="#e0e0e0"/></svg><svg width="11" height="12"><path d="M1 4.500h6v6H1zM3 2h6.500v6" fill="none" stroke="#e0e0e0" stroke-width="2"/></svg><svg width="9" height="12"><path d="M0 2.500l8 8.500M8 2.500L0 11" stroke="#e0e0e0" stroke-width="2.500"/></svg></div>
   <button class="wcs position-absolute d-flex align-items-center justify-content-around">WCS<svg width="8" height="6"><path d="M1 .5h6L4 5z" fill="none" stroke="#ddd"/></svg></button>
   <div class="note position-absolute">当前视图：体系0_2层视图_结构布置图<br>当前楼层：体系0_2层(标准层2)_H=5.000m</div>
  </div>
  <div class="cmd d-flex flex-shrink-0">
   <div class="cmdside d-flex flex-column align-items-center justify-content-between py-1"><svg width="18" height="5"><path d="M0 1h18M0 4h18" stroke="#ccc" stroke-width="1.500" stroke-dasharray="1.500 1.500"/></svg><svg width="9" height="9"><path d="M0 0l9 9M9 0L0 9" stroke="#ddd" stroke-width="2"/></svg><svg width="15" height="15"><path d="M1 14l8-8M9 7a4 4 0 0 1 4-6l-2 3 1 1 3-1a4 4 0 0 1-5 4" stroke="#ddd" stroke-width="2" fill="none"/></svg></div>
   <div class="flex-grow-1"><div class="history">命令: 指定对角点或 [栏选(F)/圈围(WP)/圈交(CP)]:<br>命令: *取消*</div>
   <div class="prompt d-flex align-items-center"><svg width="16" height="12"><path d="M.5.5h15v11H.5z" fill="#fff" stroke="#666"/><path d="M3 4l2 2-2 2M7 9h5" fill="none" stroke="#666"/></svg><svg width="7" height="5"><path d="M0 0h7L3.500 5z" fill="#666"/></svg><span>指定对角点或 [</span><button>栏选(<b>F</b>)</button><button>圈围(<b class="v">WP</b>)</button><button class="me-0">圈交(<b class="v">CP</b>)</button><span>]:</span></div></div>
  </div>
 </section>
</main>

<footer class="status d-flex align-items-end flex-shrink-0">
 <nav class="ltabs d-flex align-self-start"><a href="#" class="ltab on">模型</a><a href="#" class="ltab">布局1</a><a href="#" class="ltab">布局2</a><a href="#" class="ltab" aria-label="新建布局">+</a></nav>
 <div class="ms-auto"></div>
 <div class="ime d-flex align-items-end flex-shrink-0"><svg width="30" height="26" viewBox="0 0 30 26"><path d="M2 3l23-3 5 22-22 4-3-1z" fill="#e84e14"/><path d="M23 6c-6-3-14-2-14 3 0 6 14 2 13 8-1 5-9 5-14 2" fill="none" stroke="#fff" stroke-width="4"/></svg><div class="imebar d-flex align-items-center justify-content-around ps-1"><svg width="14" height="14"><path d="M1 14L7 0l6 14M3 9h8" fill="none" stroke="#0a62d0" stroke-width="2"/></svg><svg width="12" height="14"><circle cx="2" cy="4" r="1.500" fill="#0a62d0"/><path d="M9 8v3l-2 3" stroke="#0a62d0" stroke-width="2.500" fill="none"/></svg><svg width="12" height="16"><rect x="3.500" width="5" height="9" rx="2.500" fill="#0a62d0"/><path d="M1 7a5 5 0 0 0 10 0M6 12v4" fill="none" stroke="#0a62d0" stroke-width="2"/></svg><svg width="15" height="12"><rect width="15" height="12" rx="1" fill="#0a62d0"/><path d="M2 3h11M2 6h11M4 9h7" stroke="#fff" stroke-dasharray="2 1"/></svg><svg width="15" height="14"><path d="M4 0h2l1.500 1.500L9 0h2l4 3-2 4h-1v7H3V7H2L0 3z" fill="#0a62d0"/></svg><svg width="13" height="13"><path d="M0 0h6v6H0zM0 7h6v6H0zM7 7h6v6H7z" fill="#0a62d0"/><circle cx="10" cy="3" r="3" fill="#0a62d0"/></svg><svg width="20" height="20"><circle cx="10" cy="11" r="9" fill="#eee"/><path d="M1 8h13l-2 6H6z" fill="#222"/><path d="M2 8h5v4H3z" fill="#f08020"/><path d="M17 4v6M14 7h6" stroke="#f0a020"/></svg></div></div>
 <div class="cell cr">00</div>
 <button class="cell bg-transparent" aria-label="板"><svg width="24" height="16"><path d="M5 0h19l-5 16H0z" fill="#999"/><text x="5" y="13" font-size="13" fill="#eee">板</text></svg></button>
 <button class="cell" aria-label="选择"><svg width="24" height="24"><path d="M.5.5h23v23H.5z" fill="#300" stroke="#4a78f0"/><path d="M6 1v22M12 1v22M18 1v22M1 6h22M1 12h22M1 18h22" stroke="#e00000"/><path d="M9 5l9 9-4 .5 2 5-2.500.5-2-5L9 17z" fill="#58c030"/></svg></button>
 <button class="cell" aria-label="显示"><svg width="20" height="20"><path d="M1 0h18v20H1z" fill="#c4c8cc"/><path d="M4 3h12v9H4z" fill="#fff" stroke="#777"/><path d="M6 9l3-3 2 3 3-3" stroke="#57a" fill="none"/></svg></button>
 <button class="cell" aria-label="轴"><svg width="20" height="18"><path d="M10 2v8M10 10l-7 5M10 10l7 5" stroke="#777" stroke-width="2"/><circle cx="10" cy="3" r="2.500" fill="#888"/><circle cx="10" cy="10" r="4" fill="#8a8a8a"/><circle cx="3" cy="15" r="2.500" fill="#888"/><circle cx="17" cy="15" r="2.500" fill="#888"/></svg></button>
 <button class="cell tx sp">模型</button>
 <button class="cell" aria-label="栅格"><svg width="16" height="16"><path d="M3 0v16M8 0v16M13 0v16M0 3h16M0 8h16M0 13h16" stroke="#d8dce0" stroke-width="1.500"/></svg></button>
 <button class="cell" aria-label="捕捉"><svg width="14" height="14"><path d="M1.500 1v13M6.500 1v13M11.500 1v13" stroke="#d8dce0" stroke-width="2" stroke-dasharray="2 3"/></svg></button>
 <button class="cell cr" aria-label="捕捉选项"><svg width="8" height="5"><use href="#dn"/></svg></button>
 <button class="cell sp gap2" aria-label="推断约束"><svg width="16" height="16"><path d="M0 10h8v6H0z" fill="#ddd"/><path d="M8 10V1h7v5H8" fill="none" stroke="#ddd"/></svg></button>
 <button class="cell sp" aria-label="动态输入"><svg width="18" height="14"><path d="M0 4h8M4 0v8" stroke="#ddd"/><path d="M6 8h12v5H6z" fill="#ddd"/><path d="M8 10h4v2H8z" fill="#3b4453"/></svg></button>
 <button class="cell sp" aria-label="正交"><svg width="16" height="16"><path d="M1 0v15h15M1 9h5v6" fill="none" stroke="#ddd" stroke-width="1.500"/></svg></button>
 <button class="cell" aria-label="极轴"><svg width="16" height="16"><circle cx="7" cy="9" r="6" fill="none" stroke="#ddd" stroke-width="1.300"/><path d="M7 9h9M7 9l7-8" fill="none" stroke="#ddd" stroke-width="1.300"/></svg></button>
 <button class="cell cr" aria-label="极轴选项"><svg width="8" height="5"><use href="#dn"/></svg></button>
 <button class="cell" aria-label="等轴测"><svg width="14" height="16"><path d="M1 2l12 12" stroke="#d8a060"/><path d="M7 0v16" stroke="#60d040" stroke-width="1.500"/><path d="M5.500 6.500h3v3h-3z" fill="#eee"/></svg></button>
 <button class="cell cr" aria-label="等轴测选项"><svg width="8" height="5"><use href="#dn"/></svg></button>
 <button class="cell sp" aria-label="追踪"><svg width="16" height="14"><path d="M14 0L2 12h14" fill="none" stroke="#ddd"/><path d="M6 7h4v3H7z" fill="#ddd"/></svg></button>
 <button class="cell hl" aria-label="对象捕捉"><svg width="16" height="16"><path d="M3 3h12v12H3z" fill="none" stroke="#fff" stroke-width="1.500"/><path d="M.5.5h4v4h-4z" fill="#5b8cc4" stroke="#fff"/></svg></button>
 <button class="cell cr" aria-label="对象捕捉选项"><svg width="8" height="5"><use href="#dn"/></svg></button>
 <button class="cell sp" aria-label="线宽"><svg width="16" height="14"><path d="M0 1h16M9 5h7M7 9h9M9 13h7" stroke="#ddd"/><path d="M0 5h8M0 9h6M0 12.500h8" stroke="#ddd" stroke-width="2.500"/></svg></button>
 <button class="cell sp" aria-label="循环"><svg width="16" height="16"><path d="M0 3h6M3 0v6" stroke="#ddd"/><path d="M5 5h11v11H5z" fill="#a4aca8" stroke="#ccc"/></svg></button>
 <button class="cell hl sp" aria-label="三维捕捉"><svg width="16" height="16"><path d="M5 4l4-3h6v8l-4 4H7M5 4v4M5 4h6v8M11 4l4-3" fill="none" stroke="#fff"/><path d="M.5 10.500h5v5h-5z" fill="none" stroke="#fff" stroke-width="1.500"/></svg></button>
 <button class="cell cr" aria-label="三维捕捉选项"><svg width="8" height="5"><use href="#dn"/></svg></button>
 <button class="cell sp gap2" aria-label="动态UCS"><svg width="16" height="16"><path d="M2 0v14h14M0 3l2-3 2 3M13 12l3 2-3 2" fill="none" stroke="#ddd"/><path d="M10 1L6 7h3l-2 4 6-6h-3l3-4z" fill="#ddd"/></svg></button>
 <button class="cell" aria-label="过滤"><svg width="16" height="16"><path d="M1.500 4.500h10v10h-10zM2 4l4-3h9v9l-4 4M12 4l3-3" fill="none" stroke="#ddd" stroke-dasharray="3 1"/><path d="M0 3h3v3H0zM10 3h3v3h-3zM0 13h3v3H0zM10 13h3v3h-3z" fill="#70b8f0"/></svg></button>
 <button class="cell cr" aria-label="过滤选项"><svg width="8" height="5"><use href="#dn"/></svg></button>
 <button class="cell hl" aria-label="小控件"><svg width="16" height="16"><path d="M8 1l6 3v8l-6 3-6-3V4zM8 1v7M8 8l-6 4M8 8l6 4" fill="none" stroke="#fff"/><circle cx="8" cy="8" r="2" fill="#fff"/></svg></button>
 <button class="cell cr" aria-label="小控件选项"><svg width="8" height="5"><use href="#dn"/></svg></button>
 <button class="cell hl gap2" aria-label="注释可见性"><svg width="18" height="18"><use href="#comp"/><circle cx="14.500" cy="4" r="2.500" fill="none" stroke="#fff"/></svg></button>
 <button class="cell hl" aria-label="自动缩放"><svg width="18" height="18"><use href="#comp"/><path d="M15 0l-3 4h3l-2 4 5-5h-3l2-3z" fill="#fff"/></svg></button>
 <button class="cell" aria-label="注释比例"><svg width="18" height="18"><use href="#comp"/></svg></button>
 <button class="cell scale">1:1 / 100%</button><button class="cell cr" aria-label="比例"><svg width="8" height="5"><use href="#dn"/></svg></button>
 <button class="cell sp" aria-label="工作空间"><svg width="15" height="15" color="#dcdfe2"><use href="#gear"/></svg></button><button class="cell cr" aria-label="工作空间选项"><svg width="8" height="5"><use href="#dn"/></svg></button>
 <button class="cell sp" aria-label="监视器"><svg width="16" height="16"><path d="M0 8h16M8 0v16" stroke="#ddd" stroke-width="2"/></svg></button>
 <div class="units sp d-flex align-items-center position-relative"><svg class="mx-2" width="9" height="16"><path d="M1 0h8v2H5v2h4v1H5v2h4v2H5v2h4v1H5v2h4v2H1z" fill="#ddd"/></svg><select aria-label="单位"><option>小数</option></select><svg class="over a-unit" width="8" height="5"><use href="#dn"/></svg></div>
 <button class="cell sp wide" aria-label="快捷特性"><svg width="13" height="16"><path d="M.5.5h12v15H.5z" fill="none" stroke="#ddd"/><path d="M3 4h2M7 4h4M3 8h2M7 8h4M3 12h2M7 12h4" stroke="#ddd" stroke-width="1.500"/></svg></button>
 <button class="cell sp" aria-label="锁定"><svg width="17" height="16"><path d="M8 12H1V1h14v4" fill="none" stroke="#ddd" stroke-width="1.500"/><path d="M8 10h8v6H8z" fill="#ddd"/><path d="M12 10V7a2 2 0 0 1 4 0" fill="none" stroke="#ddd"/></svg></button><button class="cell cr" aria-label="锁定选项"><svg width="8" height="5"><use href="#dn"/></svg></button>
 <button class="cell sp wide" aria-label="隔离"><svg width="16" height="16"><path d="M.5.5h6v6h-6zM4 15.500h7L7.500 10z" fill="none" stroke="#ddd"/><circle cx="13" cy="7" r="2.500" fill="none" stroke="#ddd"/></svg></button>
 <button class="cell hl" aria-label="硬件加速"><svg width="18" height="18"><circle cx="9" cy="9" r="7.500" fill="#5aa0d8" stroke="#e8f0f8" stroke-width="1.500"/><path d="M9 9l4-4" stroke="#fff" stroke-width="2"/></svg></button>
 <button class="cell sp" aria-label="图纸"><svg width="16" height="16"><path d="M2 1h9l3 4v6H2z" fill="#2060b0"/><path d="M0 4h8M4 0v8" stroke="#ddd"/><path d="M0 10h6v5H0z" fill="#f0b000"/><path d="M7 12l3 3 6-6" fill="none" stroke="#50c040" stroke-width="2"/></svg></button>
 <button class="cell" aria-label="性能"><svg width="16" height="16"><path d="M0 0h15v12H0z" fill="#ccc"/><path d="M1 8c3-8 5-5 6-2s3 3 7-3" fill="none" stroke="#456"/><path d="M12 8l4 8H8z" fill="#f0a050"/></svg></button>
 <button class="cell wide" aria-label="附着"><svg width="18" height="16"><path d="M1 1h4v6H2V3M3 8v7h14V8l-4-3H8" fill="none" stroke="#e8b880" stroke-width="1.300"/></svg></button>
 <button class="cell sp wide" aria-label="全屏"><svg width="16" height="12"><path d="M.5.5h15v11H.5z" fill="none" stroke="#ddd"/><path d="M3 9l3-3M3 6v3h3M13 3l-3 3M10 3h3v3" fill="none" stroke="#ddd"/></svg></button>
 <button class="cell me-1" aria-label="自定义"><svg width="16" height="14"><path d="M0 1h16M0 7h16M0 13h16" stroke="#ddd" stroke-width="2"/></svg></button>
</footer>
</body>
</html>
